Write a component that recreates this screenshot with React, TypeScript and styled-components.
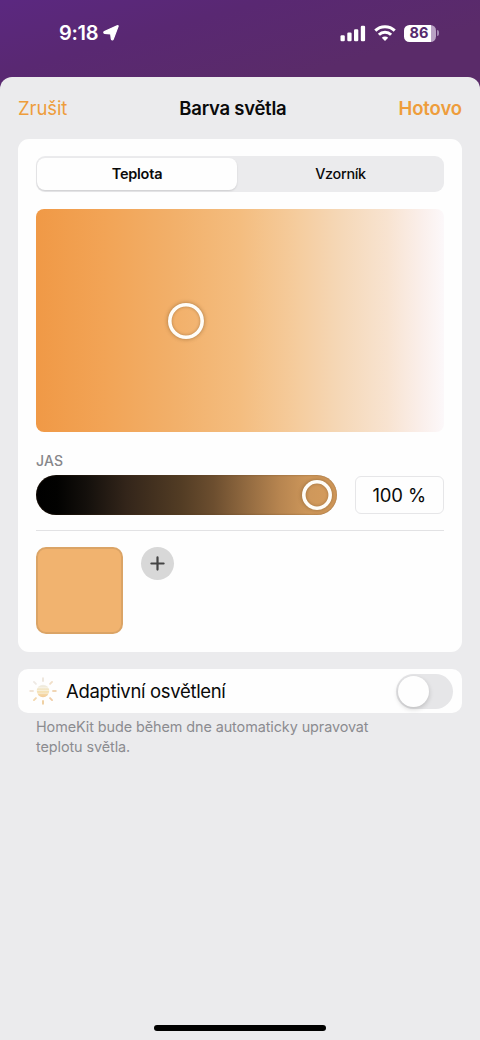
import React from "react";
import styled, { createGlobalStyle } from "styled-components";

const GlobalStyle = createGlobalStyle`
  * { box-sizing: border-box; }
  body { margin: 0; background: #ebebed; }
  button { border: 0; padding: 0; margin: 0; background: none; font: inherit; color: inherit; }
`;

const Screen = styled.div`
  width: 480px;
  height: 1040px;
  display: flex;
  flex-direction: column;
  overflow: hidden;
  font-family: Inter, "Liberation Sans", sans-serif;
  color: #0a0a0a;
  background: linear-gradient(165deg, #5b2880 0px, #592872 70px, #5a2b69 150px);
`;

const StatusBar = styled.header`
  height: 77px;
  flex: none;
  display: flex;
  justify-content: space-between;
  align-items: flex-start;
  padding: 21px 41px 0 59px;
  color: #fff;
`;

const StatusGroup = styled.div<{ $gap: number }>`
  height: 24px;
  display: flex;
  align-items: center;
  gap: ${(p) => p.$gap}px;
`;

const Label = styled.span<{ $size: number; $weight?: number; $spacing?: number }>`
  font-size: ${(p) => p.$size}px;
  font-weight: ${(p) => p.$weight ?? 400};
  letter-spacing: ${(p) => p.$spacing ?? 0}px;
  line-height: 24px;
  white-space: nowrap;
`;

const Battery = styled.div`
  display: flex;
  align-items: center;
  gap: 1px;
  &::after {
    content: "";
    width: 2px;
    height: 6px;
    border-radius: 0 3px 3px 0;
    background: #a488b3;
  }
`;

const BatteryBody = styled.div`
  width: 32px;
  height: 17px;
  border-radius: 5.5px;
  display: flex;
  align-items: center;
  justify-content: center;
  padding-right: 2px;
  color: #55296d;
  background: linear-gradient(90deg, #fff 27px, #b9a2c4 27px);
`;

const Sheet = styled.main`
  flex: 1;
  display: flex;
  flex-direction: column;
  padding: 0 18px;
  border-radius: 12px 12px 0 0;
  background: #ebebed;
`;

const NavBar = styled.nav`
  height: 61.5px;
  flex: none;
  display: flex;
  justify-content: space-between;
  align-items: center;
`;

const NavButton = styled.button`
  color: #ee9d3c;
`;

const Card = styled.section`
  height: 513px;
  flex: none;
  display: flex;
  flex-direction: column;
  padding: 17.5px 18px 0;
  border-radius: 11px;
  background: #fefefe;
`;

const Segmented = styled.div`
  height: 36px;
  flex: none;
  display: grid;
  grid-template-columns: 200px 1fr;
  padding: 2px 0 2px 1px;
  border-radius: 9px;
  background: #ebebed;
`;

const Segment = styled.button<{ $active?: boolean }>`
  display: flex;
  align-items: center;
  justify-content: center;
  border-radius: 8px;
  background: ${(p) => (p.$active ? "#fefefe" : "transparent")};
  box-shadow: ${(p) => (p.$active ? "0 1px 2px rgba(0, 0, 0, 0.13)" : "none")};
`;

const TemperatureField = styled.div`
  position: relative;
  height: 223px;
  flex: none;
  margin-top: 17px;
  border-radius: 8px;
  background: linear-gradient(
    90deg,
    #f09946 0%,
    #f2a456 17%,
    #f2b06a 34%,
    #f4bd7f 50%,
    #f5cb9b 63%,
    #f5d8b8 75%,
    #f8e3d0 86%,
    #faeee9 94%,
    #fcf8fa 100%
  );
`;

const Ring = styled.span<{ $size: number }>`
  width: ${(p) => p.$size}px;
  height: ${(p) => p.$size}px;
  border-radius: 50%;
  box-shadow:
    0 0 4px rgba(80, 50, 15, 0.45),
    inset 0 0 0 3.6px #fffdf8,
    inset 0 0 3px 4px rgba(80, 50, 15, 0.3);
`;

const FieldRing = styled(Ring)`
  position: absolute;
  left: 132px;
  top: 93.5px;
`;

const Caption = styled.div`
  height: 24px;
  flex: none;
  margin-top: 17px;
  color: #86868a;
`;

const BrightnessRow = styled.div`
  display: flex;
  align-items: center;
  justify-content: space-between;
  margin-top: 2px;
`;

const BrightnessTrack = styled.div`
  width: 301px;
  height: 40px;
  display: flex;
  align-items: center;
  justify-content: flex-end;
  padding-right: 5px;
  border-radius: 20px;
  background: linear-gradient(
    90deg,
    #000 0%,
    #020201 7%,
    #14100c 17%,
    #33251a 30%,
    #523c24 48%,
    #6c4e2f 59%,
    #926a40 70%,
    #b78550 81%,
    #cf985b 91%,
    #d69c5c 100%
  );
  box-shadow: inset 0 0 2px rgba(90, 60, 30, 0.6);
`;

const ValueBox = styled.div`
  width: 89.5px;
  height: 38.5px;
  display: flex;
  align-items: center;
  justify-content: center;
  border: 1px solid #e6e6e8;
  border-radius: 6px;
`;

const Divider = styled.div`
  height: 1px;
  flex: none;
  margin: 15px 0 0.5px;
  background: #e2e2e4;
`;

const SwatchRow = styled.div`
  display: flex;
  align-items: flex-start;
  gap: 18px;
  margin-top: 15px;
`;

const Swatch = styled.button`
  width: 87px;
  height: 87px;
  border: 2px solid #dba466;
  border-radius: 10px;
  background: #f1b36f;
`;

const AddButton = styled.button`
  width: 33px;
  height: 33px;
  display: grid;
  place-items: center;
  border-radius: 50%;
  background: #d8d8d8;
`;

const SettingRow = styled.section`
  height: 44px;
  flex: none;
  display: flex;
  align-items: center;
  margin-top: 17.5px;
  padding: 0 9px 0 11px;
  border-radius: 10px;
  background: #fefefe;
`;

const SettingName = styled.div`
  flex: 1;
  margin-left: 9px;
`;

const Toggle = styled.button`
  width: 57px;
  height: 35px;
  display: flex;
  align-items: center;
  padding: 2px;
  border-radius: 18px;
  background: #e6e6e8;
`;

const Knob = styled.span`
  width: 31px;
  height: 31px;
  border-radius: 50%;
  background: #fefefe;
  box-shadow: 0 2px 5px rgba(0, 0, 0, 0.18);
`;

const Footnote = styled.p`
  flex: 1;
  margin: 4px 0 0;
  padding-left: 18px;
  font-size: 14.4px;
  line-height: 20px;
  letter-spacing: -0.08px;
  color: #8b8b90;
`;

const HomeIndicator = styled.div`
  width: 172px;
  height: 6px;
  flex: none;
  align-self: center;
  margin-bottom: 9px;
  border-radius: 3px;
  background: #000;
`;

const LocationIcon = () => (
  <svg width="16" height="16" viewBox="0 0 16 16" fill="#fff" stroke="#fff" strokeWidth="1.200" strokeLinejoin="round">
    <path d="M15.100 1.300 10.200 14.300c-.4.900-1.700.8-1.900-.3L7.700 8.900 1.600 8.300C.6 8.200.5 7 1.400 6.600L14.100.8c.8-.3 1.200 0 1 .5Z" />
  </svg>
);

const SignalIcon = () => (
  <svg width="26" height="17" viewBox="0 0 26 17" fill="#fff">
    <rect x="0.500" y="10.200" width="4.300" height="6" rx="1.200" />
    <rect x="7.300" y="7.500" width="4.300" height="8.700" rx="1.200" />
    <rect x="14" y="4.200" width="4.300" height="12" rx="1.200" />
    <rect x="20.800" y="0.800" width="4.300" height="15.400" rx="1.200" />
  </svg>
);

const WifiIcon = () => (
  <svg width="22" height="17" viewBox="0 0 22 17" fill="none" stroke="#fff" strokeWidth="3">
    <path d="M1.300 5.700a14 14 0 0 1 19.400 0" />
    <path d="M4.900 9.800a8.700 8.700 0 0 1 12.200 0" />
    <path d="M11 15.900 7.800 12.800a4.600 4.600 0 0 1 6.400 0Z" fill="#fff" stroke="none" />
  </svg>
);

const PlusIcon = () => (
  <svg width="15" height="15" viewBox="0 0 15 15" stroke="#444" strokeWidth="2.200" strokeLinecap="round">
    <path d="M7.500 1.400v12.200M1.400 7.500h12.200" />
  </svg>
);

const rays = [
  { angle: 0, color: "#eee6dc" },
  { angle: 45, color: "#f1dfc8" },
  { angle: 90, color: "#f0d5b4" },
  { angle: 135, color: "#f0cda6" },
  { angle: 180, color: "#efcfa0" },
  { angle: 225, color: "#f3d7ae" },
  { angle: 270, color: "#f1e4d6" },
  { angle: 315, color: "#eee9e4" },
];

const SunIcon = () => (
  <svg width="28" height="28" viewBox="0 0 28 28">
    <defs>
      <linearGradient id="sunFill" x1="0" y1="0" x2="0" y2="1">
        <stop offset="0" stopColor="#efeee8" />
        <stop offset="0.550" stopColor="#f5e2b4" />
        <stop offset="1" stopColor="#f3cb97" />
      </linearGradient>
    </defs>
    <circle cx="14" cy="14" r="6.200" fill="url(#sunFill)" />
    <path d="M8 10.700h12M7.500 13.400h13M8 16.200h12" stroke="#fff" strokeWidth="0.700" opacity="0.700" />
    {rays.map((ray) => (
      <path
        key={ray.angle}
        d="M14 1.200v2.800"
        stroke={ray.color}
        strokeWidth="1.900"
        strokeLinecap="round"
        transform={`rotate(${ray.angle} 14 14)`}
      />
    ))}
  </svg>
);

export default function App() {
  return (
    <Screen>
      <GlobalStyle />
      <StatusBar>
        <StatusGroup $gap={5}>
          <Label $size={20} $weight={600} $spacing={-0.3}>9:18</Label>
          <LocationIcon />
        </StatusGroup>
        <StatusGroup $gap={8}>
          <SignalIcon />
          <WifiIcon />
          <Battery>
            <BatteryBody>
              <Label $size={14.5} $weight={700}>86</Label>
            </BatteryBody>
          </Battery>
        </StatusGroup>
      </StatusBar>
      <Sheet>
        <NavBar>
          <NavButton>
            <Label $size={18.5} $spacing={-0.1}>Zrušit</Label>
          </NavButton>
          <Label $size={18.5} $weight={600} $spacing={-0.25}>Barva světla</Label>
          <NavButton>
            <Label $size={18.5} $weight={600} $spacing={-0.1}>Hotovo</Label>
          </NavButton>
        </NavBar>
        <Card>
          <Segmented>
            <Segment $active>
              <Label $size={14.5} $weight={600} $spacing={-0.25}>Teplota</Label>
            </Segment>
            <Segment>
              <Label $size={14.4} $weight={450} $spacing={-0.3}>Vzorník</Label>
            </Segment>
          </Segmented>
          <TemperatureField>
            <FieldRing $size={36} />
          </TemperatureField>
          <Caption>
            <Label $size={14} $weight={550} $spacing={0.2}>JAS</Label>
          </Caption>
          <BrightnessRow>
            <BrightnessTrack>
              <Ring $size={30.5} />
            </BrightnessTrack>
            <ValueBox>
              <Label $size={18.5} $spacing={-0.1}>100 %</Label>
            </ValueBox>
          </BrightnessRow>
          <Divider />
          <SwatchRow>
            <Swatch aria-label="Barva" />
            <AddButton aria-label="Přidat">
              <PlusIcon />
            </AddButton>
          </SwatchRow>
        </Card>
        <SettingRow>
          <SunIcon />
          <SettingName>
            <Label $size={18.5} $spacing={-0.33}>Adaptivní osvětlení</Label>
          </SettingName>
          <Toggle role="switch" aria-checked={false} aria-label="Adaptivní osvětlení">
            <Knob />
          </Toggle>
        </SettingRow>
        <Footnote>
          HomeKit bude během dne automaticky upravovat
          <br />
          teplotu světla.
        </Footnote>
        <HomeIndicator />
      </Sheet>
    </Screen>
  );
}
